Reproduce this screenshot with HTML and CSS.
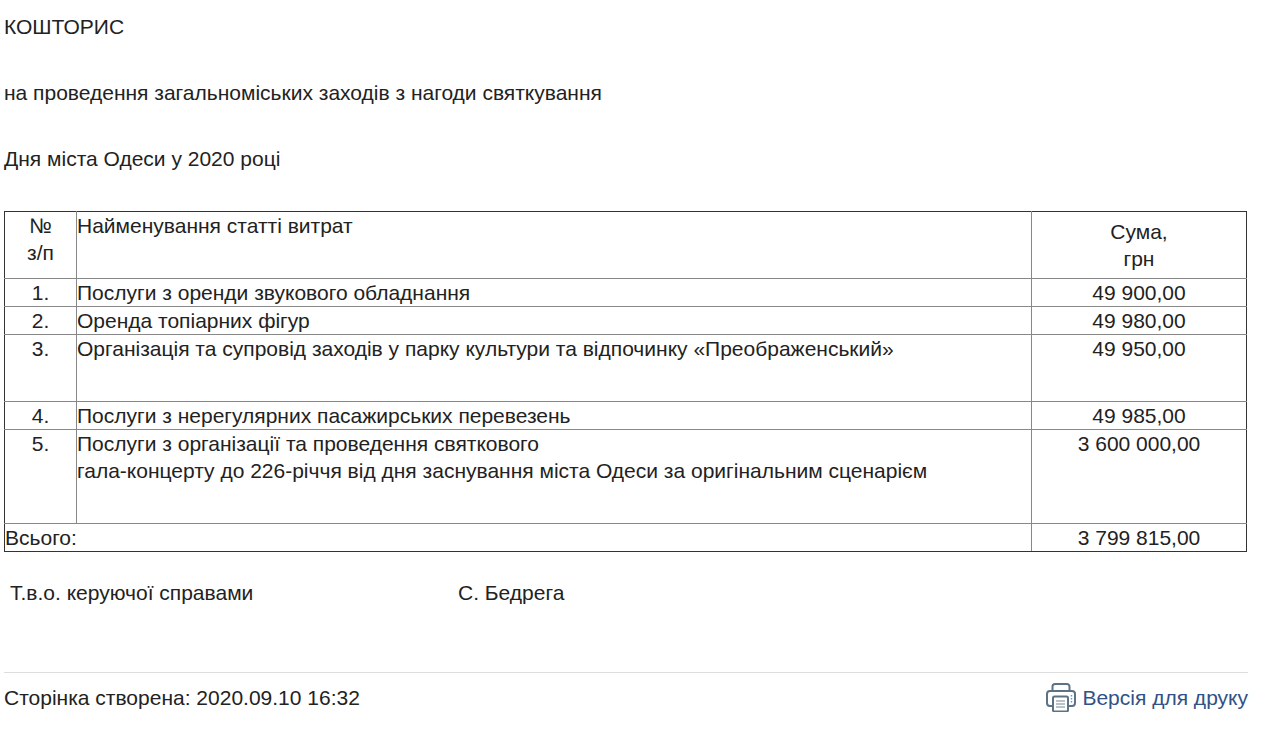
FILE: index.html
```html
<!DOCTYPE html>
<html lang="uk">
<head>
<meta charset="utf-8">
<title>Кошторис</title>
<link rel="stylesheet" href="styles.css">
</head>
<body>
<main class="page">
  <p class="line">КОШТОРИС</p>
  <p class="line">на проведення загальноміських заходів з нагоди святкування</p>
  <p class="line">Дня міста Одеси у 2020 році</p>
  <table class="estimate">
    <colgroup><col class="col-num"><col class="col-name"><col class="col-sum"></colgroup>
    <tr class="row-head">
      <td class="num">№<br>з/п</td>
      <td>Найменування статті витрат</td>
      <td class="sum sum-head">Сума,<br>грн</td>
    </tr>
    <tr><td class="num">1.</td><td>Послуги з оренди звукового обладнання</td><td class="sum">49 900,00</td></tr>
    <tr><td class="num">2.</td><td>Оренда топіарних фігур</td><td class="sum">49 980,00</td></tr>
    <tr class="row-tall"><td class="num">3.</td><td>Організація та супровід заходів у парку культури та відпочинку «Преображенський»</td><td class="sum">49 950,00</td></tr>
    <tr><td class="num">4.</td><td>Послуги з нерегулярних пасажирських перевезень</td><td class="sum">49 985,00</td></tr>
    <tr class="row-big"><td class="num">5.</td><td>Послуги з організації та проведення святкового<br>гала-концерту до 226-річчя від дня заснування міста Одеси за оригінальним сценарієм</td><td class="sum">3 600 000,00</td></tr>
    <tr class="row-total"><td colspan="2">Всього:</td><td class="sum">3 799 815,00</td></tr>
  </table>
  <div class="signature"><span class="sign-role">Т.в.о. керуючої справами</span><span>С. Бедрега</span></div>
  <footer class="foot">
    <span>Сторінка створена: 2020.09.10 16:32</span>
    <a class="print" href="#">
      <svg class="print-icon" width="30" height="30" viewBox="0 -1 30 30" fill="none" aria-hidden="true">
        <path d="M6.500 8V3.500A2.500 2.500 0 0 1 9 1h12a2.500 2.500 0 0 1 2.500 2.500V8" stroke="#5d7285" stroke-width="2"/>
        <path d="M6 23H4a3 3 0 0 1-3-3V11a3 3 0 0 1 3-3h22a3 3 0 0 1 3 3v9a3 3 0 0 1-3 3h-3" stroke="#5d7285" stroke-width="2"/>
        <rect x="7" y="13.500" width="15" height="15" rx="1.500" stroke="#5d7285" stroke-width="2" fill="#fff"/>
        <path d="M10 18h9M10 21h9M10 24h9" stroke="#a3afb8" stroke-width="1.500"/>
        <path d="M25.500 12v1.500M25.500 15v1.500M25.500 18v1.500" stroke="#5b9bd5" stroke-width="1.500"/>
      </svg>
      <span>Версія для друку</span>
    </a>
  </footer>
</main>
</body>
</html>
```
FILE: styles.css
```css
html, body { margin: 0; background: #fff; }
body {
  font-family: "Liberation Sans", Arial, sans-serif;
  font-size: 21px;
  line-height: 27px;
  color: #222;
}
.page { padding: 13px 23px 0 4px; }
.line { margin: 0 0 39px; }
.estimate {
  width: 1243px;
  table-layout: fixed;
  border-collapse: collapse;
}
.col-num { width: 72px; }
.col-sum { width: 215px; }
.estimate td {
  border: 1px solid #888;
  padding: 0;
  vertical-align: top;
}
.estimate .num, .estimate .sum { text-align: center; }
.estimate tr:first-child td { border-top-color: #333; }
.estimate tr:last-child td { border-bottom-color: #333; }
.estimate td:first-child { border-left-color: #333; }
.estimate td:last-child { border-right-color: #333; }
.row-head td { height: 66px; }
.estimate .sum-head { height: 65px; vertical-align: middle; padding-bottom: 1px; }
.row-tall td { height: 66px; }
.row-big td { height: 93px; }
.signature { display: flex; margin: 27px 0 0 6px; }
.sign-role { width: 448px; }
.foot {
  display: flex;
  justify-content: space-between;
  align-items: center;
  margin-top: 66px;
  padding-top: 9px;
  border-top: 1px solid #ddd;
}
.print { display: flex; align-items: center; gap: 6px; color: #2f5288; text-decoration: none; }
.print-icon { display: block; overflow: visible; }
```
